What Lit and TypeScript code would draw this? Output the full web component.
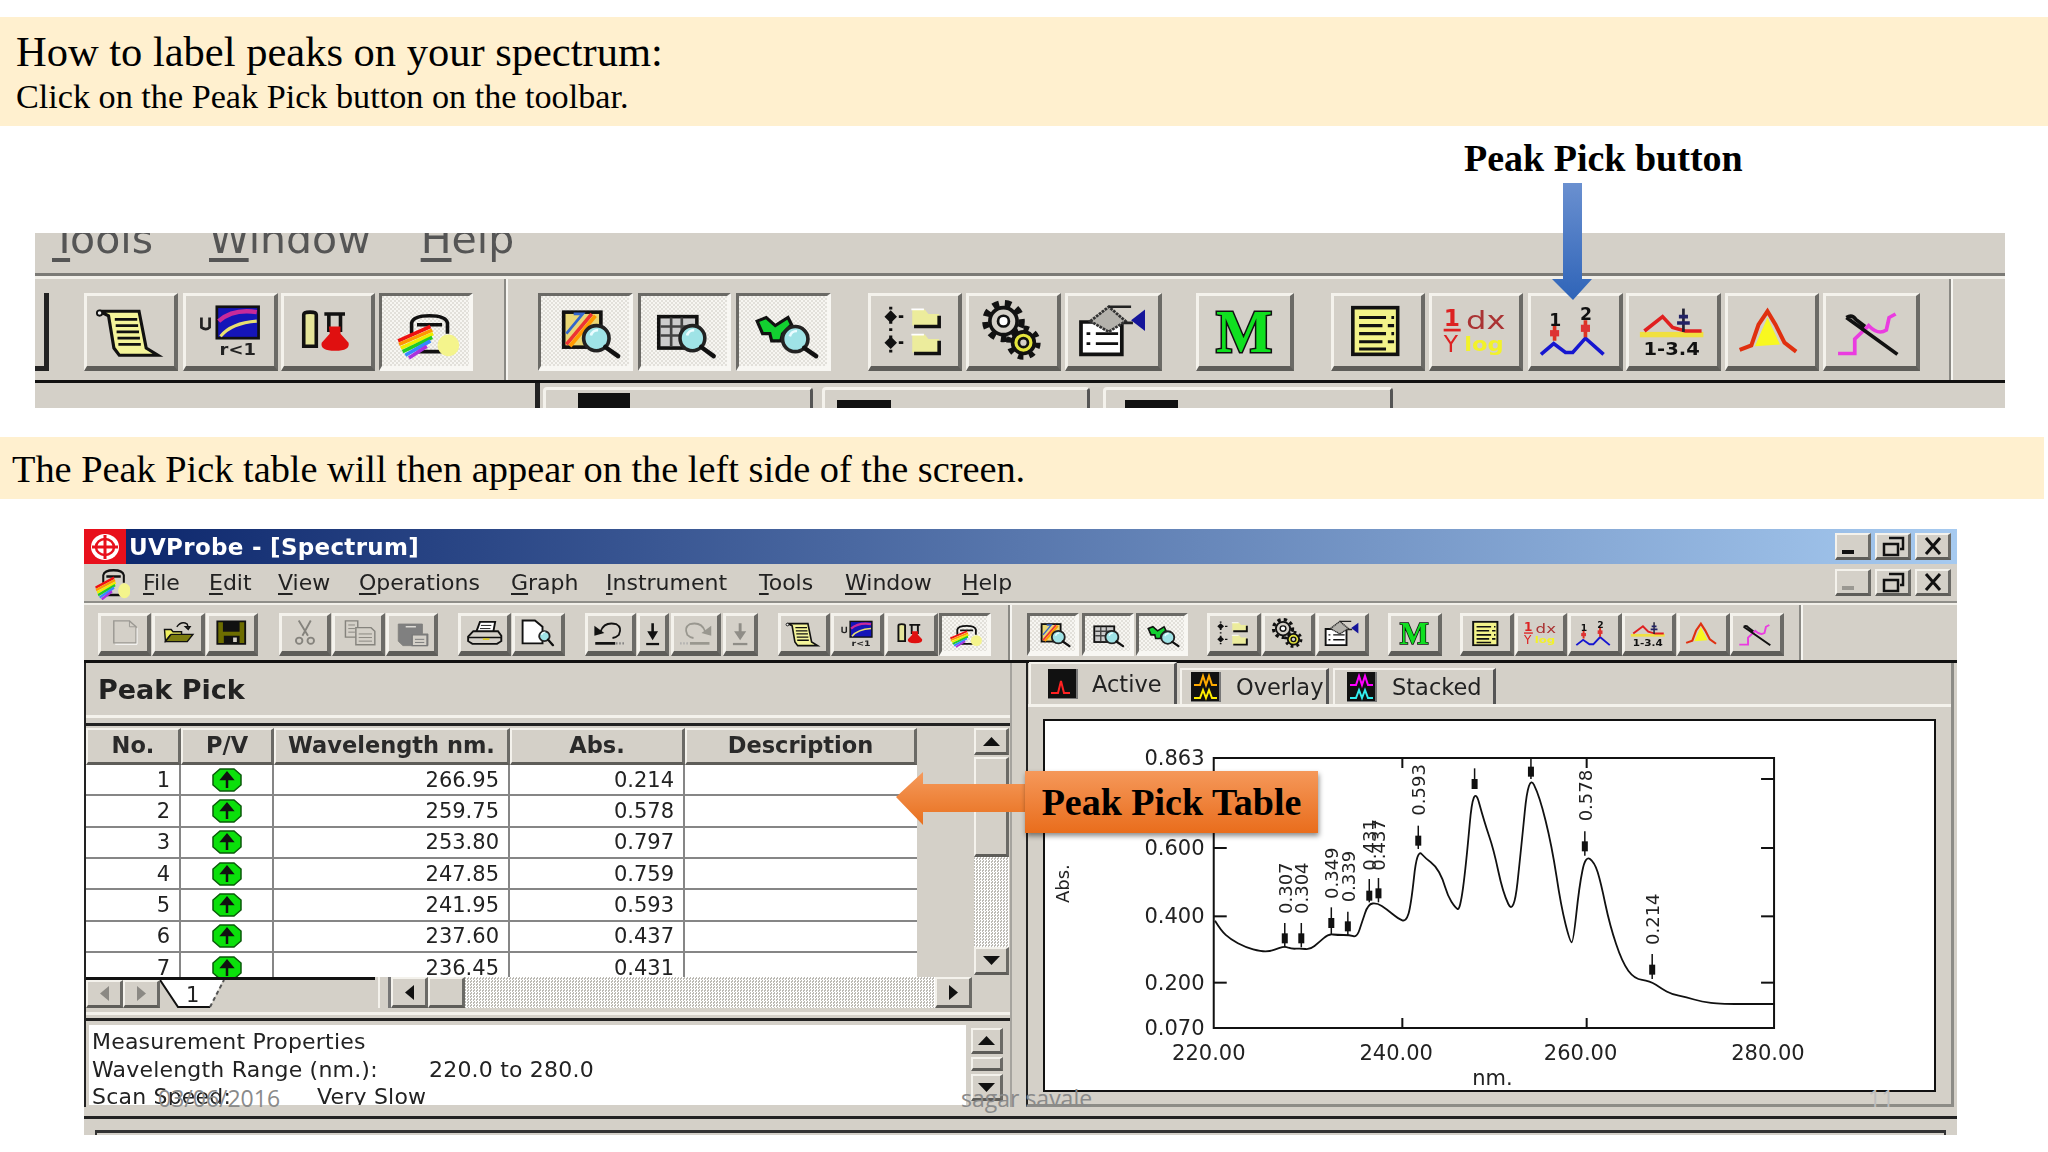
import { LitElement, html, css, svg } from "lit";
import { customElement } from "lit/decorators.js";

const K = "#111";
const mag = (cx: number, cy: number, r: number, ex: number, ey: number) => svg`
  <circle cx=${cx} cy=${cy} r=${r} fill="#9fe3e6" stroke="#222" stroke-width="4"/>
  <path d="M${cx - 6} ${cy - 3}a8 8 0 0 1 8 -6" fill="none" stroke="#eafcff" stroke-width="3"/>
  <path d="M${cx + r * 0.7} ${cy + r * 0.7}L${ex} ${ey}" stroke="#111" stroke-width="5" stroke-linecap="round"/>`;

const rainbow = svg`
  <path d="M33 42v-12q2 -8 20 -8t20 8v12M39 32h28" fill="none" stroke="${K}" stroke-width="4"/>
  <path d="M40 62h26l6 -4M66 50h6" fill="none" stroke="${K}" stroke-width="4"/>
  <circle cx="74" cy="55" r="12" fill="#f4f48c"/>
  <g fill="none" stroke-width="4">
    <path d="M18 50L54 34" stroke="#e11"/><path d="M19 54L56 38" stroke="#f90"/>
    <path d="M21 58L57 42" stroke="#ee0"/><path d="M23 62L56 46" stroke="#2c2"/>
    <path d="M26 66L54 50" stroke="#38f"/><path d="M30 69L50 56" stroke="#a3d"/>
  </g>`;

const ICONS: Record<string, any> = {
  doc: svg`<path d="M27 11H60L74 24V60H27Z" fill="#d4d0c8" stroke="#9a9892" stroke-width="3"/><path d="M60 11V24H74" fill="none" stroke="#9a9892" stroke-width="2"/><path d="M30 63H76V27" fill="none" stroke="#fff" stroke-width="2"/>`,
  open: svg`<path d="M20 30h14l4 5h18v8H32L22 56Z" fill="#f0f060" stroke="#111" stroke-width="3"/><path d="M22 57L34 41H80L68 57Z" fill="#7c7c10" stroke="#111" stroke-width="3"/><path d="M46 24q10 -14 22 -6l2 8M64 24h10l-4 6z" fill="none" stroke="#111" stroke-width="3"/>`,
  save: svg`<path d="M18 12H78V62H18Z" fill="#6d6d00" stroke="#111" stroke-width="4"/><rect x="30" y="13" width="36" height="22" fill="#111"/><rect x="32" y="44" width="34" height="18" fill="#111"/><rect x="52" y="48" width="8" height="10" fill="#d4d0c8"/>`,
  cut: svg`<path d="M36 10L56 44M62 10L44 44" stroke="#85837d" stroke-width="4" fill="none"/><circle cx="37" cy="55" r="7" fill="none" stroke="#85837d" stroke-width="4"/><circle cx="62" cy="55" r="7" fill="none" stroke="#85837d" stroke-width="4"/>`,
  copy: svg`<path d="M22 11H48V47H22Z" fill="#d4d0c8" stroke="#85837d" stroke-width="3"/><path d="M28 20h14M28 28h14M28 36h14" stroke="#85837d" stroke-width="2"/><path d="M44 26H76L84 34V64H44Z" fill="#d4d0c8" stroke="#85837d" stroke-width="3"/><path d="M50 40h28M50 48h28M50 56h28" stroke="#85837d" stroke-width="2"/>`,
  paste: svg`<path d="M20 18H72V40H84V66H30L20 56Z" fill="#808080" stroke="#807f7c" stroke-width="2"/><path d="M36 24H58" stroke="#e8e6e0" stroke-width="3"/><path d="M50 42H82V66H50Z" fill="#d4d0c8" stroke="#777" stroke-width="3"/><path d="M56 52h20M56 59h20" stroke="#777" stroke-width="2"/>`,
  print: svg`<path d="M32 36L40 13H72L68 36" fill="#fff" stroke="#111" stroke-width="4"/><path d="M42 21h22M40 28h22" stroke="#111" stroke-width="2"/><path d="M15 46L26 34H78L85 44V56L76 62H24L15 56Z" fill="#d4d0c8" stroke="#111" stroke-width="4"/><path d="M15 48H85" stroke="#111" stroke-width="3"/><rect x="46" y="50" width="14" height="3" fill="#dc0"/>`,
  preview: svg`<path d="M16 10H42L58 24V61H16Z" fill="#fff" stroke="#111" stroke-width="4"/>${mag(62, 45, 11, 80, 65)}`,
  undo: svg`<path d="M28 34q8 -22 34 -16q14 8 6 24q-6 6 -14 7" fill="none" stroke="#111" stroke-width="4"/><path d="M14 22L36 38L14 44Z" fill="#111"/><rect x="16" y="58" width="44" height="6" fill="#111"/><path d="M62 61h20" stroke="#777" stroke-width="5" stroke-dasharray="3 4"/>`,
  redo: svg`<path d="M70 34q-8 -22 -34 -16q-14 8 -6 24q6 6 14 7" fill="none" stroke="#99978f" stroke-width="4"/><path d="M84 22L62 38L84 44Z" fill="#99978f"/><rect x="36" y="58" width="44" height="6" fill="#99978f"/><path d="M14 61h20" stroke="#aaa" stroke-width="5" stroke-dasharray="3 4"/>`,
  downb: svg`<path d="M44 16h10v18h16L49 54L28 34h16Z" fill="#111"/><rect x="24" y="60" width="50" height="5" fill="#111"/>`,
  downg: svg`<path d="M44 16h10v18h16L49 54L28 34h16Z" fill="#8f8d87"/><rect x="24" y="60" width="50" height="5" fill="#8f8d87"/>`,
  script: svg`<path d="M14 17H58L66 58L79 66H36L30 58L24 22Z" fill="#f4f49a" stroke="#111" stroke-width="3.5"/><circle cx="14" cy="19" r="3" fill="#eee" stroke="#111" stroke-width="2"/><path d="M31 26h25M32 33h25M33 40h25M34 47h25M35 54h25" stroke="#111" stroke-width="3"/>`,
  spec: svg`<rect x="34" y="12" width="46" height="35" fill="#1515b8" stroke="#111" stroke-width="3"/><path d="M36 28Q52 14 78 18" fill="none" stroke="#c82a9a" stroke-width="5"/><path d="M38 45Q50 30 78 28" fill="none" stroke="#e8e070" stroke-width="3.5"/><path d="M17 24v11q5 4 9 0V24" fill="none" stroke="#222" stroke-width="3"/><text x="37" y="66" font-family="DejaVu Sans" font-weight="700" font-size="17" fill="#222" textLength="40" lengthAdjust="spacingAndGlyphs">r&lt;1</text>`,
  flask: svg`<path d="M22 21q0 -3 7 -3t7 3V56H22Z" fill="#e5e59a" stroke="#111" stroke-width="4"/><path d="M45 20H68M50 20V40M63 20V40" stroke="#111" stroke-width="4"/><path d="M50 34h13v8l9 10q2 9 -15 9t-15 -9l9 -10Z" fill="#e01010"/>`,
  rainbow,
  zimg: svg`<rect x="25" y="18" width="41" height="39" fill="#e9d775" stroke="#111" stroke-width="4"/><path d="M28 54L56 20" stroke="#e33" stroke-width="4"/><path d="M32 56L60 22" stroke="#f90" stroke-width="4"/><path d="M36 20L46 20L28 42" stroke="#36c" stroke-width="3" fill="none"/>${mag(61, 47, 14, 85, 67)}`,
  ztab: svg`<rect x="20" y="23" width="43" height="35" fill="#ccc" stroke="#111" stroke-width="4"/><path d="M22 34H60M22 44H60M34 24V56M46 24V56" stroke="#444" stroke-width="3"/>${mag(58, 47, 14, 82, 67)}`,
  zx: svg`<path d="M20 28L30 24L40 33L54 24L58 32L48 42L46 50H36L34 42L26 42Z" fill="#12d030" stroke="#111" stroke-width="3.5"/>${mag(62, 48, 14, 85, 67)}`,
  tree: svg`<path d="M22 12V66" stroke="#111" stroke-width="3.5" stroke-dasharray="3 5"/><path d="M22 16l7 7l-7 7l-7 -7ZM22 45l7 7l-7 7l-7 -7Z" fill="#111"/><path d="M31 23h5M31 52h5" stroke="#111" stroke-width="3"/><path d="M46 15h14l4 5h12v13H46Z" fill="#ecec9c"/><path d="M46 43h14l4 5h12v15H46Z" fill="#ecec9c"/><path d="M76 22v12H48M76 50v14H48" fill="none" stroke="#111" stroke-width="4"/><path d="M45 15h14M45 43h14" stroke="#fff" stroke-width="2"/>`,
  gear: svg`<circle cx="38" cy="28" r="15" fill="#d4d0c8" stroke="#111" stroke-width="4"/><circle cx="38" cy="28" r="20" fill="none" stroke="#111" stroke-width="7" stroke-dasharray="7 6.6"/><circle cx="38" cy="28" r="6" fill="#fff" stroke="#111" stroke-width="3"/><circle cx="60" cy="52" r="12" fill="#e4e43c" stroke="#111" stroke-width="4"/><circle cx="60" cy="52" r="16" fill="none" stroke="#111" stroke-width="6" stroke-dasharray="6 6.5"/><circle cx="60" cy="52" r="5" fill="#d4d0c8" stroke="#111" stroke-width="3"/>`,
  export: svg`<path d="M14 29H42L58 32V65H14Z" fill="#fff" stroke="#111" stroke-width="4"/><path d="M20 42h4M30 42h24M20 53h4M30 53h24" stroke="#111" stroke-width="3"/><path d="M24 28L44 12L62 28L44 40Z" fill="#b4b2ac" stroke="#333" stroke-width="3" stroke-dasharray="3 1"/><path d="M44 12H68M60 30H70" stroke="#222" stroke-width="3"/><path d="M68 27L83 15V39Z" fill="#15159a"/>`,
  m: svg`<text x="18" y="62" font-family="Liberation Serif" font-weight="700" font-size="68" fill="#10e020" stroke="#111" stroke-width="3.5" paint-order="stroke" textLength="60" lengthAdjust="spacingAndGlyphs">M</text>`,
  list: svg`<rect x="21" y="13" width="50" height="52" fill="#f3f38a" stroke="#111" stroke-width="4"/><path d="M28 24H58M64 24h3M28 33H54M60 33h7M28 42H58M64 42h3M28 51H54M60 51h7M28 59H58" stroke="#111" stroke-width="3.5"/>`,
  dx: svg`<text x="13" y="33" font-family="DejaVu Sans" font-weight="700" font-size="26" fill="#d22">1</text><path d="M13 38H32" stroke="#d22" stroke-width="3"/><text x="13" y="62" font-family="DejaVu Sans" font-size="26" fill="#d22">Y</text><text x="38" y="37" font-family="DejaVu Sans" font-size="27" fill="#a33" textLength="44" lengthAdjust="spacingAndGlyphs">dx</text><text x="36" y="61" font-family="DejaVu Sans" font-weight="700" font-size="21" fill="#f2f22a" textLength="44" lengthAdjust="spacingAndGlyphs">log</text>`,
  peaks: svg`<path d="M11 65L25 53L38 63H46L60 47L80 65" fill="none" stroke="#1616d0" stroke-width="4"/><path d="M26 33V50M60 27V46" stroke="#d32" stroke-width="4"/><rect x="21" y="38" width="10" height="7" fill="#d33"/><rect x="55" y="32" width="10" height="8" fill="#d33"/><text x="20" y="33" font-family="DejaVu Sans" font-weight="700" font-size="19" fill="#111">1</text><text x="54" y="27" font-family="DejaVu Sans" font-weight="700" font-size="19" fill="#111">2</text>`,
  n134: svg`<rect x="12" y="40" width="70" height="6" fill="#f0e040"/><path d="M17 39L37 23L48 35L62 39H80" fill="none" stroke="#e02020" stroke-width="4"/><path d="M60 14V40" stroke="#223" stroke-width="3"/><path d="M53 30h14M55 23h10" stroke="#226" stroke-width="4"/><text x="16" y="66" font-family="DejaVu Sans" font-weight="700" font-size="20" fill="#111" textLength="62" lengthAdjust="spacingAndGlyphs">1-3.4</text>`,
  ypeak: svg`<path d="M30 56L44 24L58 54Z" fill="#f8f820"/><path d="M13 60L26 55L34 32L44 17L53 32L63 52L76 62" fill="none" stroke="#e03010" stroke-width="4.5"/>`,
  needle: svg`<path d="M13 64H31V48L46 33Q56 44 65 38L68 24L75 20" fill="none" stroke="#ea3ce0" stroke-width="4"/><path d="M22 24L77 65M22 24q6 -4 10 2L42 34" fill="none" stroke="#111" stroke-width="4"/>`,
};

type Item = [string, number, number, boolean?];
const BIG: Item[] = [
  ["script", 84, 178], ["spec", 183, 278], ["flask", 281, 375], ["rainbow", 379, 473, true], ["|", 504, 507],
  ["zimg", 537, 632, true], ["ztab", 637, 730, true], ["zx", 735, 830, true],
  ["tree", 867, 961], ["gear", 965, 1060], ["export", 1064, 1161], ["m", 1195, 1293],
  ["list", 1330, 1424], ["dx", 1428, 1522], ["peaks", 1527, 1622], ["n134", 1625, 1720], ["ypeak", 1724, 1818], ["needle", 1822, 1919],
  ["|", 1948, 1951],
];
const SMALL: Item[] = [
  ["doc", 98, 151], ["open", 152, 205], ["save", 206, 258], ["cut", 279, 331], ["copy", 332, 385], ["paste", 386, 438],
  ["print", 458, 511], ["preview", 512, 565], ["undo", 585, 636], ["downb", 637, 669], ["redo", 671, 721], ["downg", 723, 758],
  ["script", 778, 830], ["spec", 831, 884], ["flask", 885, 938], ["rainbow", 939, 991, true], ["|", 1008, 1010],
  ["zimg", 1025, 1077, true], ["ztab", 1080, 1132, true], ["zx", 1134, 1186, true],
  ["tree", 1205, 1259], ["gear", 1260, 1313], ["export", 1314, 1367], ["m", 1386, 1440],
  ["list", 1458, 1512], ["dx", 1513, 1565], ["peaks", 1566, 1620], ["n134", 1620, 1674], ["ypeak", 1675, 1728], ["needle", 1728, 1782],
  ["|", 1797, 1799],
];

const ROWS = [
  [1, "266.95", "0.214"], [2, "259.75", "0.578"], [3, "253.80", "0.797"], [4, "247.85", "0.759"],
  [5, "241.95", "0.593"], [6, "237.60", "0.437"], [7, "236.45", "0.431"],
];

const CURVE = [[320,665],[330,695],[345,720],[370,745],[395,757],[410,757],[425,747],[435,742],[445,750],[460,748],[475,752],[490,730],[505,705],[520,708],[540,708],[552,715],[560,670],[570,615],[585,612],[600,630],[620,660],[632,668],[640,620],[650,450],[665,480],[680,500],[692,540],[700,590],[712,625],[720,635],[730,500],[742,250],[760,370],[775,450],[790,580],[808,650],[820,450],[832,225],[850,290],[870,440],[885,620],[900,730],[905,730],[915,560],[925,470],[940,490],[950,550],[965,680],[985,790],[1005,840],[1030,845],[1050,870],[1065,885],[1090,895],[1115,908],[1145,915],[1233,915]];
const STEMS = [[434,672,745,718],[461,672,745,718],[510,625,705,672],[537,638,710,682],[572,540,610,590],[587,537,610,583],[652,380,450,425],[744,208,270,255],[836,180,240,218],[924,397,470,442],[1034,765,840,812]];
const PEAKS: [string, number, number][] = [["0.307",435,645],["0.304",460,645],["0.349",510,600],["0.339",537,610],["0.431",572,515],["0.437",587,515],["0.593",652,350],["0.578",925,367],["0.214",1034,738]];
const MENU: [string, string, number][] = [["F", "ile", 66], ["E", "dit", 69], ["V", "iew", 81], ["O", "perations", 152], ["G", "raph", 95], ["I", "nstrument", 153], ["T", "ools", 86], ["W", "indow", 117], ["H", "elp", 50]];
const px = (v: number) => v / 1.633 + 1020;
const py = (v: number) => v / 3 + 700;

@customElement("app-root")
export class AppRoot extends LitElement {
  static styles = css`
    :host { display: block; width: 2048px; height: 1152px; overflow: hidden; position: relative; background: #fff; font-family: "DejaVu Sans", sans-serif; color: #222; }
    .serif { font-family: "Liberation Serif", serif; color: #000; }
    .band { background: #fff0cf; }
    .b1 { margin-top: 17px; height: 109px; padding: 10px 0 0 16px; box-sizing: border-box; }
    .b1 .t1 { font-size: 42.5px; line-height: 50px; }
    .b1 .t2 { font-size: 34.2px; line-height: 40px; }
    .gap { height: 107px; padding: 10px 0 0 1464px; box-sizing: border-box; font-size: 38px; line-height: 44px; font-weight: 700; }
    .cap { margin-left: 35px; width: 1970px; height: 175px; background: #d4d0c8; overflow: hidden; filter: blur(.7px); }
    .capmenu { height: 40px; border-bottom: 3px solid #7b7a76; box-sizing: content-box; display: flex; overflow: hidden; color: #555; font-size: 41px; line-height: 40px; }
    .capmenu span { position: relative; top: -14px; height: 44px; }
    .capmenu u { text-decoration-thickness: 4px; text-underline-offset: 5px; }
    .bar { display: flex; align-items: flex-start; border-bottom: 3px solid #111; box-sizing: border-box; }
    .capbar { height: 107px; padding-top: 14px; border-top: 3px solid #f1efe9; }
    .capbar .bv { height: 78px; }
    .capbar .vsep { margin-top: -14px; }
    .bv { box-sizing: border-box; background: #d4d0c8; border: solid; border-width: 3px 4px 5px 3px; border-color: #f4f2ec #6b6a66 #5e5d59 #f4f2ec; flex: none; }
    .on { background: repeating-conic-gradient(#f7f6f2 0 25%, #e2e0da 0 50%) 0 0 / 4px 4px; border-color: #6b6a66 #f8f7f3 #f8f7f3 #6b6a66; }
    .bv svg { width: 100%; height: 100%; display: block; overflow: visible; }
    .bv svg.tv { width: 17px; height: 9px; }
    .bv svg.tz { width: 9px; height: 15px; }
    .vsep { flex: none; align-self: stretch; border-left: 2px solid #8a8984; border-right: 2px solid #f6f5f1; }
    .edge { flex: none; width: 14px; height: 78px; box-sizing: border-box; border: solid #222; border-width: 0 5px 5px 0; margin-right: 21px; }
    .captabs { display: flex; height: 25px; }
    .ct { box-sizing: border-box; height: 21px; margin-top: 4px; background: #d4d0c8; border-top: 3px solid #f4f2ec; border-left: 3px solid #f4f2ec; border-right: 3px solid #555; border-radius: 4px 4px 0 0; flex: none; }
    .ct i { display: block; height: 20px; background: #111; margin-top: 3px; }
    .leftdark { border-left: 5px solid #222; height: 25px; flex: none; }

    .b2 { margin-top: 29px; width: 2044px; height: 62px; padding-left: 12px; box-sizing: border-box; font-size: 38.35px; line-height: 64px; }
    .win { margin: 30px 0 0 84px; width: 1873px; height: 606px; background: #d4d0c8; overflow: hidden; filter: blur(.55px); font-size: 21px; color: #222; }
    .tb { height: 35px; background: linear-gradient(90deg, #0a246a, #a6caf0); display: flex; align-items: center; color: #fff; font-weight: 700; font-size: 23px; letter-spacing: .3px; }
    .logo { width: 42px; height: 35px; background: #e8101c; flex: none; display: flex; align-items: center; justify-content: center; margin-right: 3px; }
    .wbtns { margin-left: auto; display: flex; gap: 4px; padding-right: 6px; }
    .wb { width: 36px; height: 27px; padding: 0; display: block; border-width: 2px 3px 3px 2px; }
    .wb svg { display: block; }
    .mb { height: 39px; display: flex; align-items: center; border-bottom: 2px solid #8f8e89; box-sizing: border-box; font-size: 22px; }
    .mi { flex: none; width: 36px; height: 34px; margin: 0 13px 0 10px; }
    .mb span { flex: none; white-space: nowrap; }
    .mb u { text-decoration-thickness: 1.5px; text-underline-offset: 3px; }
    .wtool { height: 60px; padding-top: 8px; border-top: 2px solid #f2f0ea; }
    .wtool .bv { height: 43px; }
    .wtool .vsep { margin-top: -8px; }
    .main { display: flex; height: 453px; }
    .left { width: 928px; flex: none; box-sizing: border-box; border-left: 2px solid #222; border-right: 2px solid #a5a39e; height: 444px; }
    .pp { height: 55px; display: flex; align-items: center; padding-left: 12px; font-weight: 700; font-size: 27px; border-bottom: 3px solid #f4f2ec; box-sizing: border-box; }
    .tarea { margin-top: 5px; border-top: 3px solid #222; display: flex; height: 251px; box-sizing: content-box; }
    .grid { width: 831px; flex: none; overflow: hidden; height: 251px; display: grid; grid-template-columns: 95px 93px 236px 175px 232px; grid-auto-rows: 31.33px; grid-template-rows: 39px; align-content: start; }
    .th { box-sizing: border-box; height: 37px; margin-top: 2px; text-align: center; font-weight: 700; font-size: 22.5px; line-height: 30px; border-width: 2px 3px 3px 2px; color: #2a2a2a; white-space: nowrap; }
    .td { background: #fff; box-sizing: border-box; border-bottom: 2px solid #868686; border-right: 2px solid #868686; padding-right: 9px; display: flex; align-items: center; justify-content: flex-end; }
    .td.c { justify-content: center; padding: 0; }
    .td.d { border-right: 0; }
    .vs { margin-left: 57px; width: 35px; flex: none; display: flex; flex-direction: column; height: 249px; padding-top: 2px; }
    .sb { box-sizing: border-box; flex: none; border-width: 2px 3px 3px 2px; display: flex; align-items: center; justify-content: center; }
    .hatch { background: repeating-conic-gradient(#fff 0 25%, #bcbab4 0 50%) 0 0 / 3px 3px; }
    .hbar { display: flex; height: 31px; }
    .hl { width: 289px; border-top: 3px solid #111; box-sizing: border-box; display: flex; flex: none; }
    .hl .sb { width: 37px; height: 28px; }
    .tabn { width: 68px; height: 28px; flex: none; display: block; }
    .hr { display: flex; flex: 1; max-width: 597px; }
    .hr .sb { height: 31px; width: 37px; }
    .hsep { width: 13px; margin-left: 3px; box-sizing: border-box; border-left: 2px solid #f4f2ec; border-right: 3px solid #777; flex: none; }
    .hr .h { flex: 1; }
    .prop { margin-top: 4px; border-top: 3px solid #f4f2ec; }
    .pbox { border-top: 3px solid #222; margin-top: 3px; height: 87px; padding-top: 4px; box-sizing: border-box; display: flex; }
    .ptxt { background: #fff; width: 877px; margin-left: 3px; height: 80px; flex: none; overflow: hidden; box-sizing: border-box; padding: 3px 0 0 3px; font-size: 22px; letter-spacing: .2px; line-height: 27.5px; white-space: nowrap; }
    .ptxt .r { display: flex; }
    .ptxt .k { width: 337px; }
    .ptxt .k2 { width: 225px; }
    .pvs { margin-left: 5px; width: 32px; display: flex; flex-direction: column; flex: none; gap: 3px; padding-top: 3px; }
    .right { margin-left: 14px; width: 928px; flex: none; box-sizing: border-box; border-left: 2px solid #222; height: 444px; display: flex; flex-direction: column; border-right: 3px solid #8d8c87; border-bottom: 3px solid #8d8c87; }
    .rtabs { height: 41px; display: flex; padding-left: 1px; align-items: flex-end; flex: none; }
    .rt { box-sizing: border-box; display: flex; border: solid #f4f2ec; border-width: 2px 0 0 2px; border-right: 3px solid #555; height: 36px; align-items: center; flex: none; font-size: 22.5px; }
    .rt.a { height: 42px; }
    .rt svg { flex: none; }
    .rbody { flex: 1; border-top: 3px solid #f4f2ec; padding: 12px 15px; }
    .chart { background: #fff; border: 2px solid #111; box-sizing: border-box; height: 373px; }
    .chart svg { display: block; }
    .chart text { font-family: "DejaVu Sans", sans-serif; fill: #222; font-size: 21px; }
    .chart text.v { font-size: 18px; }
    .low { border-top: 3px solid #222; height: 11px; }
    .low2 { margin: 0 11px; border: 2px solid #333; border-bottom: 0; height: 6px; border-top-width: 3px; }
    .parrow { position: absolute; left: 1540px; top: 175px; width: 70px; height: 130px; filter: blur(.3px); }
    .call { position: absolute; left: 1025px; top: 771px; width: 293px; height: 62px; background: linear-gradient(#f5985a, #e96d1c); box-shadow: 1px 3px 5px rgba(0,0,0,.45); font-family: "Liberation Serif", serif; font-weight: 700; font-size: 38px; color: #000; line-height: 62px; text-align: center; white-space: nowrap; }
    .carrow { position: absolute; left: 890px; top: 768px; width: 140px; height: 62px; }
    .foot { position: absolute; top: 1084px; font-family: "Open Sans", sans-serif; font-size: 23px; line-height: 28px; color: #8a8a8a; white-space: nowrap; }
  `;

  tri(d: string, c = "#111") {
    const p: Record<string, string> = { u: "M0 8L7 0L14 8Z", d: "M0 0L14 0L7 8Z", l: "M8 0V14L0 7Z", r: "M0 0V14L8 7Z" };
    const v = d === "u" || d === "d";
    return html`<svg class=${v ? "tv" : "tz"} viewBox=${v ? "0 0 14 8" : "0 0 8 14"} preserveAspectRatio="none"><path d=${p[d]} fill=${c}/></svg>`;
  }

  barItems(items: Item[], start: number) {
    let prev = start;
    return items.map(([n, a, b, on]) => {
      const gap = a - prev;
      prev = b;
      if (n === "|") return html`<div class="vsep" style="margin-left:${gap}px"></div>`;
      return html`<div class="bv ${on ? "on" : ""}" style="margin-left:${gap}px;width:${b - a}px"><svg viewBox="0 0 97 78" preserveAspectRatio="none">${ICONS[n]}</svg></div>`;
    });
  }

  octagon() {
    return html`<svg width="30" height="24" viewBox="0 0 30 24"><path d="M8 1H22L29 7V17L22 23H8L1 17V7Z" fill="#0be00b" stroke="#0a5a0a" stroke-width="1.5"/><path d="M15 20V7M10 11L15 5L20 11Z" stroke="#111" stroke-width="2.5" fill="#111"/></svg>`;
  }

  wbtn(kind: string, dim = false) {
    const g: Record<string, any> = {
      min: svg`<rect x="5" y="15" width="12" height="4" fill=${dim ? "#9a9892" : "#111"}/>`,
      res: svg`<path d="M12 3h14v11h-3M7 9h14v11H7Z" fill="none" stroke="#111" stroke-width="2.5"/>`,
      x: svg`<path d="M9 3L23 19M23 3L9 19" stroke="#111" stroke-width="3"/>`,
    };
    return html`<div class="bv wb"><svg viewBox="0 0 31 22">${g[kind]}</svg></div>`;
  }

  tabIcon(w: number, c1: string, c2?: string) {
    return html`<svg width="30" height="30" viewBox="0 0 30 30" style="margin:0 ${w}px 0 0">
      <rect width="29" height="30" fill="#111"/><path d="M29 0V30H0" fill="none" stroke="#777" stroke-width="2"/>
      ${c2
        ? svg`<path d="M3 13L9 13L12 4L15 13L18 4L21 13L26 13" fill="none" stroke=${c1} stroke-width="2"/><path d="M3 26L9 26L12 18L15 26L18 18L21 26L26 26" fill="none" stroke=${c2} stroke-width="2"/>`
        : svg`<path d="M3 24L10 24L13 12L16 24L22 24" fill="none" stroke=${c1} stroke-width="2"/>`}
    </svg>`;
  }

  chart() {
    const P = CURVE.map(([x, y]) => [px(x), py(y)]);
    let d = `M${P[0][0].toFixed(1)} ${P[0][1].toFixed(1)}`;
    for (let i = 1; i < P.length - 1; i++) {
      const mx = (P[i][0] + P[i + 1][0]) / 2, my = (P[i][1] + P[i + 1][1]) / 2;
      d += `Q${P[i][0].toFixed(1)} ${P[i][1].toFixed(1)} ${mx.toFixed(1)} ${my.toFixed(1)}`;
    }
    d += `L${P[P.length - 1][0].toFixed(1)} ${P[P.length - 1][1].toFixed(1)}`;
    const L = px(318), R = px(1233), T = py(177), B = py(987);
    const yt = [447, 652, 851], yr = [240, 447, 652, 851], xt = [626, 927];
    const ylab: [string, number][] = [["0.863", 177], ["0.600", 447], ["0.400", 652], ["0.200", 851], ["0.070", 987]];
    const xlab: [string, number][] = [["220.00", 310], ["240.00", 616], ["260.00", 917], ["280.00", 1223]];
    return html`<svg width="889" height="369" viewBox="1046 722 889 369">
      <rect x=${L} y=${T} width=${R - L} height=${B - T} fill="none" stroke="#111" stroke-width="2"/>
      ${yt.map((y) => svg`<path d="M${L} ${py(y)}h13" stroke="#111" stroke-width="2"/>`)}
      ${yr.map((y) => svg`<path d="M${R} ${py(y)}h-13" stroke="#111" stroke-width="2"/>`)}
      ${xt.map((x) => svg`<path d="M${px(x)} ${T}v10M${px(x)} ${B}v-10" stroke="#111" stroke-width="2"/>`)}
      <path d=${d} fill="none" stroke="#111" stroke-width="1.8"/>
      ${STEMS.map(([x, a, b, m]) => svg`<path d="M${px(x)} ${py(a)}V${py(b)}" stroke="#111" stroke-width="1.5"/><rect x=${px(x) - 3} y=${py(m) - 5} width="6" height="10" fill="#111"/>`)}
      ${PEAKS.map(([t, x, y]) => svg`<text class="v" transform="translate(${px(x) + 7} ${py(y)}) rotate(-90)">${t}</text>`)}
      ${ylab.map(([t, y]) => svg`<text x=${px(303)} y=${py(y) + 7} text-anchor="end">${t}</text>`)}
      ${xlab.map(([t, x]) => svg`<text x=${px(x)} y="1061" text-anchor="middle">${t}</text>`)}
      <text x=${px(773)} y="1086" text-anchor="middle">nm.</text>
      <text class="v" transform="translate(1070 904) rotate(-90)">Abs.</text>
    </svg>`;
  }

  render() {
    return html`
      <div class="band b1 serif">
        <div class="t1">How to label peaks on your spectrum:</div>
        <div class="t2">Click on the Peak Pick button on the toolbar.</div>
      </div>
      <div class="gap serif">Peak Pick button</div>
      <section class="cap">
        <div class="capmenu">
          <span style="margin-left:17px"><u>T</u>ools</span>
          <span style="margin-left:56px"><u>W</u>indow</span>
          <span style="margin-left:50px"><u>H</u>elp</span>
        </div>
        <div class="bar capbar"><div class="edge"></div>${this.barItems(BIG, 70)}</div>
        <div class="captabs">
          <div style="width:500px;flex:none"></div>
          <div class="leftdark"></div>
          <div class="ct" style="margin-left:3px;width:270px;padding-left:32px"><i style="width:52px"></i></div>
          <div class="ct" style="margin-left:9px;width:268px;padding-left:12px"><i style="width:54px;margin-top:10px"></i></div>
          <div class="ct" style="margin-left:13px;width:290px;padding-left:19px"><i style="width:53px;margin-top:10px"></i></div>
        </div>
      </section>
      <div class="band b2 serif">The Peak Pick table will then appear on the left side of the screen.</div>
      <section class="win">
        <div class="tb">
          <div class="logo"><svg width="32" height="30" viewBox="0 0 32 30"><ellipse cx="16" cy="15" rx="14" ry="13" fill="#fff"/><path d="M3 15H29M16 3V27" stroke="#e8101c" stroke-width="3"/><ellipse cx="16" cy="15" rx="9" ry="8" fill="none" stroke="#e8101c" stroke-width="2.5"/></svg></div>
          UVProbe - [Spectrum]
          <div class="wbtns">${this.wbtn("min")}${this.wbtn("res")}${this.wbtn("x")}</div>
        </div>
        <div class="mb">
          <svg class="mi" viewBox="15 15 70 55" preserveAspectRatio="none">${rainbow}</svg>
          ${MENU.map(([a, b, w]) => html`<span style="width:${w}px"><u>${a}</u>${b}</span>`)}
          <div class="wbtns">${this.wbtn("min", true)}${this.wbtn("res")}${this.wbtn("x")}</div>
        </div>
        <div class="bar wtool">${this.barItems(SMALL, 84)}</div>
        <div class="main">
          <div class="left">
            <div class="pp">Peak Pick</div>
            <div class="tarea">
              <div class="grid">
                ${["No.", "P/V", "Wavelength nm.", "Abs.", "Description"].map((h) => html`<div class="bv th">${h}</div>`)}
                ${ROWS.map((r) => html`<div class="td">${r[0]}</div><div class="td c">${this.octagon()}</div><div class="td">${r[1]}</div><div class="td">${r[2]}</div><div class="td d"></div>`)}
              </div>
              <div class="vs">
                <div class="bv sb" style="height:27px">${this.tri("u")}</div>
                <div class="bv sb" style="height:100px;margin-top:2px"></div>
                <div class="hatch" style="height:90px;flex:none"></div>
                <div class="bv sb" style="height:28px">${this.tri("d")}</div>
              </div>
            </div>
            <div class="hbar">
              <div class="hl">
                <div class="bv sb">${this.tri("l", "#8b8984")}</div>
                <div class="bv sb">${this.tri("r", "#8b8984")}</div>
                <svg class="tabn" viewBox="0 0 68 28"><path d="M0 -2L18 27H50L64 -2Z" fill="#fff"/><path d="M0 0L18 27H50" fill="none" stroke="#111" stroke-width="2"/><path d="M50 27L64 0" stroke="#555" stroke-width="2" stroke-dasharray="4 3"/><text x="26" y="22" font-family="DejaVu Sans" font-size="21" fill="#222">1</text></svg>
              </div>
              <div class="hr">
                <div class="hsep"></div>
                <div class="bv sb">${this.tri("l")}</div>
                <div class="bv sb"></div>
                <div class="h hatch"></div>
                <div class="bv sb">${this.tri("r")}</div>
              </div>
            </div>
            <div class="prop">
              <div class="pbox">
                <div class="ptxt">
                  <div>Measurement Properties</div>
                  <div class="r"><span class="k">Wavelength Range (nm.):</span><span>220.0 to 280.0</span></div>
                  <div class="r"><span class="k2">Scan Speed:</span><span>Very Slow</span></div>
                </div>
                <div class="pvs">
                  <div class="bv sb" style="height:26px">${this.tri("u")}</div>
                  <div class="bv sb" style="height:14px"></div>
                  <div class="bv sb" style="height:27px">${this.tri("d")}</div>
                </div>
              </div>
            </div>
          </div>
          <div class="right">
            <div class="rtabs">
              <div class="rt a" style="width:148px;padding-left:17px">${this.tabIcon(14, "#f22")}Active</div>
              <div class="rt" style="width:149px;margin-left:3px;padding-left:9px">${this.tabIcon(15, "#fa0", "#fe0")}Overlay</div>
              <div class="rt" style="width:163px;margin-left:4px;padding-left:12px">${this.tabIcon(15, "#f0f", "#3ee")}Stacked</div>
            </div>
            <div class="rbody"><div class="chart">${this.chart()}</div></div>
          </div>
        </div>
        <div class="low"></div>
        <div class="low2"></div>
      </section>

      <svg class="parrow" viewBox="0 0 70 130"><defs><linearGradient id="ba" x1="0" y1="0" x2="0" y2="1"><stop offset="0" stop-color="#6a90d0"/><stop offset="1" stop-color="#2f64b8"/></linearGradient></defs><path d="M23 8H42V104H52L33 125L12 104H23Z" fill="url(#ba)"/></svg>
      <svg class="carrow" viewBox="0 0 140 62"><defs><linearGradient id="oa" x1="0" y1="0" x2="0" y2="1"><stop offset="0" stop-color="#f59a5c"/><stop offset="1" stop-color="#e8701e"/></linearGradient></defs><path d="M6 29L33 4V16H140V44H33V57Z" fill="url(#oa)"/></svg>
      <div class="call">Peak Pick Table</div>
      <div class="foot" style="left:158px">03/06/2016</div>
      <div class="foot" style="left:961px">sagar savale</div>
      <div class="foot" style="left:1868px;color:#bdbdbd">11</div>
    `;
  }
}
